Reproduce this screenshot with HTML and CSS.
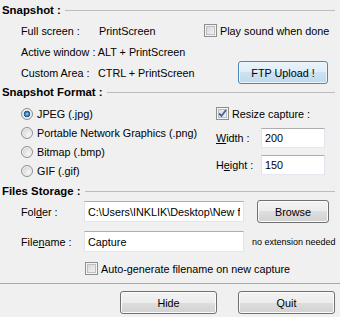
FILE: index.html
```html
<!DOCTYPE html>
<html>
<head>
<meta charset="utf-8">
<link rel="stylesheet" href="styles.css">
</head>
<body>
<div class="win">
  <div class="heading"><span>Snapshot :</span></div>
  <div class="snap">
    <div class="cell"><span class="lbl w78">Full screen :</span>PrintScreen</div>
    <label class="cell check"><span class="box"></span>Play sound when done</label>
    <div class="cell">Active window : ALT + PrintScreen</div>
    <div></div>
    <div class="cell"><span class="lbl w77">Custom Area :</span>CTRL + PrintScreen</div>
    <div class="cell"><button class="btn ftp">FTP Upload !</button></div>
  </div>

  <div class="heading h2"><span>Snapshot Format :</span></div>
  <div class="format">
    <div class="radios">
      <label class="radio"><span class="dot on"></span>JPEG (.jpg)</label>
      <label class="radio"><span class="dot"></span>Portable Network Graphics (.png)</label>
      <label class="radio"><span class="dot"></span>Bitmap (.bmp)</label>
      <label class="radio"><span class="dot"></span>GIF (.gif)</label>
    </div>
    <div class="resize">
      <label class="check rz"><span class="box checked"><svg width="9" height="9" viewBox="0 0 9 9"><path d="M1 4.5 L3.5 7 L8 1" fill="none" stroke="#4a6190" stroke-width="1.8"/></svg></span>Resize capture :</label>
      <div class="field"><span class="flbl"><u>W</u>idth :</span><input class="tb num" value="200"></div>
      <div class="field f2"><span class="flbl">H<u>e</u>ight :</span><input class="tb num" value="150"></div>
    </div>
  </div>

  <div class="heading h3"><span>Files Storage :</span></div>
  <div class="files">
    <div class="frow"><span class="flbl2">Fol<u>d</u>er :</span><input class="tb path" value="C:\Users\INKLIK\Desktop\New folder"><button class="btn browse">Browse</button></div>
    <div class="frow r2"><span class="flbl2">File<u>n</u>ame :</span><input class="tb path" value="Capture"><span class="note">no extension needed</span></div>
    <label class="check auto"><span class="box"></span>Auto-generate filename on new capture</label>
  </div>
  <div class="sep"></div>
  <div class="footer"><button class="btn big">Hide</button><button class="btn big">Quit</button></div>
</div>
</body>
</html>
```
FILE: styles.css
```css
* { box-sizing: border-box; }
html, body { margin: 0; padding: 0; background: #f0f0f0; }
body {
  font-family: "Liberation Sans", Arial, sans-serif;
  font-size: 10.8px;
  color: #000;
  width: 340px;
  height: 317px;
  overflow: hidden;
}
.win { width: 340px; }

.heading {
  display: flex;
  align-items: center;
  height: 12px;
  margin-top: 4px;
  padding-left: 2px;
  padding-right: 5px;
  font-weight: bold;
  font-size: 11.4px;
  line-height: 12px;
}
.heading::after {
  content: "";
  flex: 1;
  border-top: 1px solid #bdbdbd;
  margin-left: 4px;
}
.h2 { margin-top: 3px; }
.h3 { margin-top: 5px; }

.snap {
  display: grid;
  grid-template-columns: 183px 1fr;
  grid-auto-rows: 21px;
  padding-left: 21px;
  margin-top: 4px;
}
.cell { display: flex; align-items: center; white-space: nowrap; }
.lbl { display: inline-block; }
.w78 { width: 78px; }
.w77 { width: 77px; }

.check { display: flex; align-items: center; white-space: nowrap; }
.box {
  width: 13px;
  height: 13px;
  border: 1px solid #8e8f8f;
  background: linear-gradient(135deg, #d2d2d2 0%, #e9e9e9 60%, #f8f8f8 100%);
  box-shadow: inset 0 0 0 1px #f4f4f4, inset 0 0 0 2px #bcc0c5;
  margin-right: 3px;
  display: flex;
  align-items: center;
  justify-content: center;
  flex: none;
}
.box.checked { background: linear-gradient(135deg, #d8dde6 0%, #eef1f6 100%); }

.btn {
  font-family: "Liberation Sans", Arial, sans-serif;
  font-size: 10.8px;
  color: #000;
  border: 1px solid #707070;
  border-radius: 3px;
  background: linear-gradient(#f3f3f3 0%, #ececec 50%, #dedede 50%, #d2d2d2 100%);
  box-shadow: inset 0 0 0 1px #fbfbfb;
  padding: 0;
}
.ftp {
  margin-left: 34px;
  width: 90px;
  height: 23px;
  border-color: #4b88b6;
  background: linear-gradient(#e9f3fa 0%, #dfedf7 50%, #cce2f1 50%, #bfd9ec 100%);
  box-shadow: inset 0 0 0 1px #eef6fb;
}

.format { display: flex; padding-left: 21px; margin-top: 6px; }
.radios { width: 195px; display: grid; grid-auto-rows: 19px; }
.radio { display: flex; align-items: center; white-space: nowrap; }
.dot {
  width: 12px;
  height: 12px;
  border-radius: 50%;
  border: 1px solid #8e8f8f;
  background: radial-gradient(circle at 65% 65%, #f6f6f6 0%, #dcdcdc 60%, #c8c8c8 100%);
  box-shadow: inset 0 0 0 1px #f2f2f2;
  margin-right: 4px;
  flex: none;
}
.dot.on {
  background: radial-gradient(circle at 50% 50%, #9fd3f5 0px, #2f78b4 2px, #1c5a8e 3px, #e9e9e9 3.6px, #dcdcdc 100%);
}

.resize { display: flex; flex-direction: column; }
.rz { height: 19px; }
.field { display: flex; align-items: center; margin-top: 5px; }
.f2 { margin-top: 7px; }
.flbl { width: 45px; }

.tb {
  font-family: "Liberation Sans", Arial, sans-serif;
  font-size: 10.8px;
  color: #000;
  background: #fff;
  border: 1px solid #e2e3ea;
  border-top-color: #abadb3;
  border-bottom-color: #e3e9ef;
  padding: 0 3px;
  margin: 0;
  outline: none;
}
.num { width: 64px; height: 20px; }

.files { padding-left: 21px; margin-top: 3px; }
.frow { display: flex; align-items: center; height: 23px; white-space: nowrap; }
.flbl2 { width: 63px; }
.path { width: 160px; height: 21px; }
.browse { margin-left: 13px; width: 72px; height: 23px; }
.r2 { margin-top: 8px; height: 21px; }
.note { margin-left: 8px; font-size: 9px; }
.auto { margin-top: 10px; margin-left: 64px; height: 13px; }

.sep { margin-top: 8px; border-top: 1px solid #a8a8a8; }
.footer {
  display: flex;
  justify-content: flex-end;
  gap: 21px;
  padding-right: 5px;
  margin-top: 7px;
}
.big { width: 97px; height: 23px; }
```
